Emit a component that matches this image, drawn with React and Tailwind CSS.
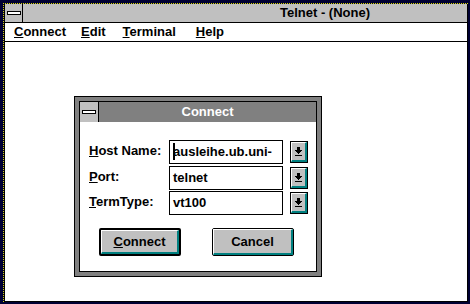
import React from 'react';

function SysBox({ className = '' }) {
  return (
    <div className={`flex items-center justify-center bg-[#c0c0c0] border-r border-black ${className}`}>
      <div className="w-[14px] h-[4px] border border-black bg-white" />
    </div>
  );
}

function DropButton() {
  return (
    <div className="w-[18px] h-[22px] border border-black bg-[#c0c0c0] flex">
      <div className="flex-1 flex items-center justify-center border-t border-l border-white border-r-2 border-b-2 border-r-[#008080] border-b-[#008080]">
        <svg width="7" height="9" viewBox="0 0 7 9" shapeRendering="crispEdges">
          <rect x="2" y="0" width="3" height="3" fill="#000" />
          <rect x="0" y="3" width="7" height="1" fill="#000" />
          <rect x="1" y="4" width="5" height="1" fill="#000" />
          <rect x="2" y="5" width="3" height="1" fill="#000" />
          <rect x="3" y="6" width="1" height="1" fill="#000" />
          <rect x="0" y="8" width="7" height="1" fill="#000" />
        </svg>
      </div>
    </div>
  );
}

function Field({ label, hot, value, cursor }) {
  return (
    <div className="flex items-center h-[24px]">
      <div className="w-[80px] leading-[22px] pb-[2px]">
        <u>{hot}</u>
        {label}
      </div>
      <div className="relative w-[114px] h-[24px] border border-black bg-white pl-[3px] leading-[22px] overflow-hidden whitespace-nowrap">
        {value}
        {cursor && (
          <div className="absolute left-[3px] top-[2px] w-[2px] h-[17px] bg-black" />
        )}
      </div>
      <div className="ml-[7px]">
        <DropButton />
      </div>
    </div>
  );
}

function Button({ children, isDefault }) {
  return (
    <div
      className={`w-[82px] h-[28px] rounded-[2px] bg-[#c0c0c0] flex ${
        isDefault ? 'border-2 border-black' : 'border border-black'
      }`}
    >
      <div className="flex-1 flex items-center justify-center border-t border-l border-white border-r-2 border-b-2 border-r-[#008080] border-b-[#008080]">
        {children}
      </div>
    </div>
  );
}

export default function App() {
  return (
    <div className="w-[470px] h-[304px] bg-[#000033] pt-[3px] pl-[3px] pr-[2px] pb-[2px] flex flex-col overflow-hidden font-['Liberation_Sans',Arial,sans-serif] text-[13px] font-bold text-black">
      <div className="flex-1 flex flex-col border-t border-l border-dotted border-[#d8d800]">
        <div className="flex-1 flex flex-col border-l border-r border-b border-black">
          {/* Title bar */}
          <div className="h-[19px] flex bg-[#c0c0c0] border-b border-black">
            <SysBox className="w-[18px]" />
            <div className="pl-[257px] leading-[18px]">Telnet - (None)</div>
          </div>

          {/* Menu bar */}
          <div className="h-[19px] flex bg-white border-b border-black leading-[18px] pl-[9px]">
            <span><u>C</u>onnect</span>
            <span className="ml-[15px]"><u>E</u>dit</span>
            <span className="ml-[17px]"><u>T</u>erminal</span>
            <span className="ml-[20px]"><u>H</u>elp</span>
          </div>

          {/* Client area */}
          <div className="flex-1 bg-white pl-[69px] pt-[54px]">
            <div className="w-[248px] h-[181px] border border-black bg-[#808080] p-[4px] flex">
              <div className="flex-1 flex flex-col border border-black bg-white">
                <div className="h-[20px] flex bg-[#808080]">
                  <SysBox className="w-[19px]" />
                  <div className="flex-1 text-center text-white leading-[20px]">Connect</div>
                </div>

                <div className="flex flex-col pl-[9px] pt-[18px]">
                  <Field hot="H" label="ost Name:" value="ausleihe.ub.uni-" cursor />
                  <div className="mt-[2px]">
                    <Field hot="P" label="ort:" value="telnet" />
                  </div>
                  <div className="mt-[1px]">
                    <Field hot="T" label="ermType:" value="vt100" />
                  </div>
                  <div className="flex mt-[13px] pl-[10px]">
                    <Button isDefault>
                      <span><u>C</u>onnect</span>
                    </Button>
                    <div className="ml-[31px]">
                      <Button>Cancel</Button>
                    </div>
                  </div>
                </div>
              </div>
            </div>
          </div>
        </div>
      </div>
    </div>
  );
}
